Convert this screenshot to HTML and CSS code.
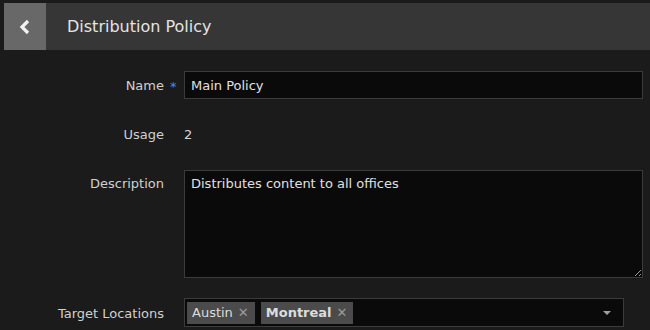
FILE: index.html
```html
<!DOCTYPE html>
<html lang="en">
<head>
    <meta charset="UTF-8">
    <title>Distribution Policy</title>
    <link rel="stylesheet" href="styles.css">
</head>
<body>
    <header class="topbar">
        <a class="back-btn" href="#">
            <svg width="12" height="16" viewBox="0 0 12 16"><path d="M9 2 L3 8 L9 14" fill="none" stroke="#f2f2f2" stroke-width="3.2"/></svg>
        </a>
        <h1 class="title">Distribution Policy</h1>
    </header>

    <form class="policy-form">
        <div class="row row-name">
            <label class="label">Name<span class="required">*</span></label>
            <input class="field" type="text" value="Main Policy">
        </div>
        <div class="row row-usage">
            <label class="label">Usage</label>
            <span class="value">2</span>
        </div>
        <div class="row row-desc">
            <label class="label">Description</label>
            <textarea class="field area">Distributes content to all offices</textarea>
        </div>
        <div class="row row-target">
            <label class="label">Target Locations</label>
            <div class="select">
                <span class="tag">Austin <span class="x">&#x2715;</span></span>
                <span class="tag tag-bold">Montreal <span class="x">&#x2715;</span></span>
                <span class="caret"></span>
            </div>
        </div>
    </form>
</body>
</html>
```

FILE: styles.css
```css
body {
    margin: 0;
    padding: 0;
    background: #1b1b1b;
    font-family: "DejaVu Sans", Verdana, sans-serif;
    color: #d6d6d6;
    overflow: hidden;
}
.topbar {
    display: flex;
    align-items: center;
    height: 47px;
    margin: 3px 0 0 4px;
    background: #363636;
}
.back-btn {
    display: flex;
    align-items: center;
    justify-content: center;
    width: 42px;
    height: 47px;
    background: #686868;
}
.title {
    margin: 0 0 0 21px;
    font-size: 16px;
    font-weight: normal;
    color: #e4e4e4;
}
.policy-form {
    padding: 21px 7px 0 0;
}
.row {
    display: grid;
    grid-template-columns: 164px 1fr;
    column-gap: 20px;
    align-items: center;
}
.label {
    position: relative;
    text-align: right;
    font-size: 13px;
    color: #d0d0d0;
}
.required {
    position: absolute;
    left: 170px;
    top: 1px;
    color: #3d8fe0;
}
.field {
    box-sizing: border-box;
    background: #0a0a0a;
    border: 1px solid #3b3b3b;
    color: #e0e0e0;
    font-family: inherit;
    font-size: 13px;
    padding: 0 6px;
    height: 28px;
    outline: none;
}
.value {
    font-size: 13px;
}
.row-usage {
    margin-top: 28px;
}
.row-desc {
    margin-top: 28px;
    align-items: start;
}
.row-desc .label {
    padding-top: 6px;
}
.area {
    height: 108px;
    padding: 5px 6px;
    resize: vertical;
}
.row-target {
    margin-top: 20px;
}
.row-target .label {
    padding-top: 1px;
}
.select {
    position: relative;
    box-sizing: border-box;
    display: flex;
    align-items: center;
    gap: 6px;
    width: 440px;
    height: 29px;
    padding: 0 2px;
    background: #0a0a0a;
    border: 1px solid #3b3b3b;
}
.tag {
    display: flex;
    align-items: center;
    height: 22px;
    padding: 0 6px 0 5px;
    background: #4b4b4b;
    font-size: 13px;
    color: #dcdcdc;
}
.tag-bold {
    font-weight: bold;
}
.x {
    margin-left: 5px;
    font-size: 13px;
    font-weight: normal;
    color: #9a9a9a;
}
.caret {
    position: absolute;
    right: 12px;
    top: 12px;
    border-left: 4px solid transparent;
    border-right: 4px solid transparent;
    border-top: 4px solid #a0a0a0;
}
```
